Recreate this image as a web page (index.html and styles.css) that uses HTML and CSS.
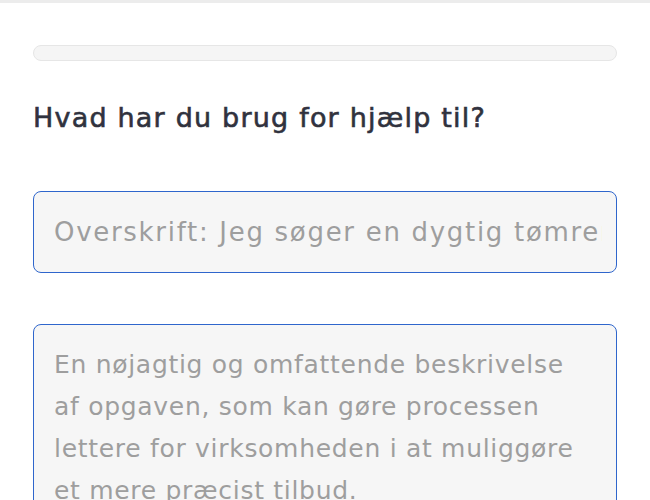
FILE: index.html
```html
<!DOCTYPE html>
<html lang="da">
<head>
    <meta charset="UTF-8">
    <meta name="viewport" content="width=device-width, initial-scale=1.0">
    <title>Opgave</title>
    <link rel="stylesheet" href="styles.css">
</head>
<body>
    <div class="topbar"></div>
    <main class="form">
        <div class="progress"><div class="progress-fill"></div></div>
        <h2 class="question">Hvad har du brug for hjælp til?</h2>
        <input class="field title-field" type="text" placeholder="Overskrift: Jeg søger en dygtig tømrer">
        <textarea class="field desc-field" placeholder="En nøjagtig og omfattende beskrivelse&#10;af opgaven, som kan gøre processen&#10;lettere for virksomheden i at muliggøre&#10;et mere præcist tilbud."></textarea>
    </main>
</body>
</html>
```

FILE: styles.css
```css
body {
    margin: 0;
    padding: 0;
    font-family: 'DejaVu Sans', 'Open Sans', sans-serif;
    background: #fff;
    overflow: hidden;
}

.topbar {
    height: 3px;
    background: #ececec;
}

.form {
    display: flex;
    flex-direction: column;
    padding: 42px 33px 0;
}

.progress {
    height: 14px;
    background: #f5f5f5;
    border: 1px solid #e6e6e6;
    border-radius: 8px;
    overflow: hidden;
}

.progress-fill {
    width: 0;
    height: 100%;
}

.question {
    margin: 38px 0 0;
    font-size: 27px;
    font-weight: 400;
    letter-spacing: 1.2px;
    -webkit-text-stroke: 0.6px #30323e;
    color: #30323e;
    line-height: 38px;
}

.field {
    box-sizing: border-box;
    width: 100%;
    border: 1.5px solid #2f66cc;
    border-radius: 8px;
    background: #f6f6f6;
    font-family: inherit;
    color: #333;
    outline: none;
}

.field::placeholder {
    color: #9e9e9e;
    opacity: 1;
}

.title-field {
    margin-top: 54px;
    height: 82px;
    padding: 0 14px 0 20px;
    font-size: 26px;
    letter-spacing: 1.7px;
}

.desc-field {
    margin-top: 51px;
    height: 260px;
    padding: 19px 20px;
    font-size: 25px;
    letter-spacing: 0.7px;
    line-height: 42px;
    resize: none;
    white-space: pre;
}
```
